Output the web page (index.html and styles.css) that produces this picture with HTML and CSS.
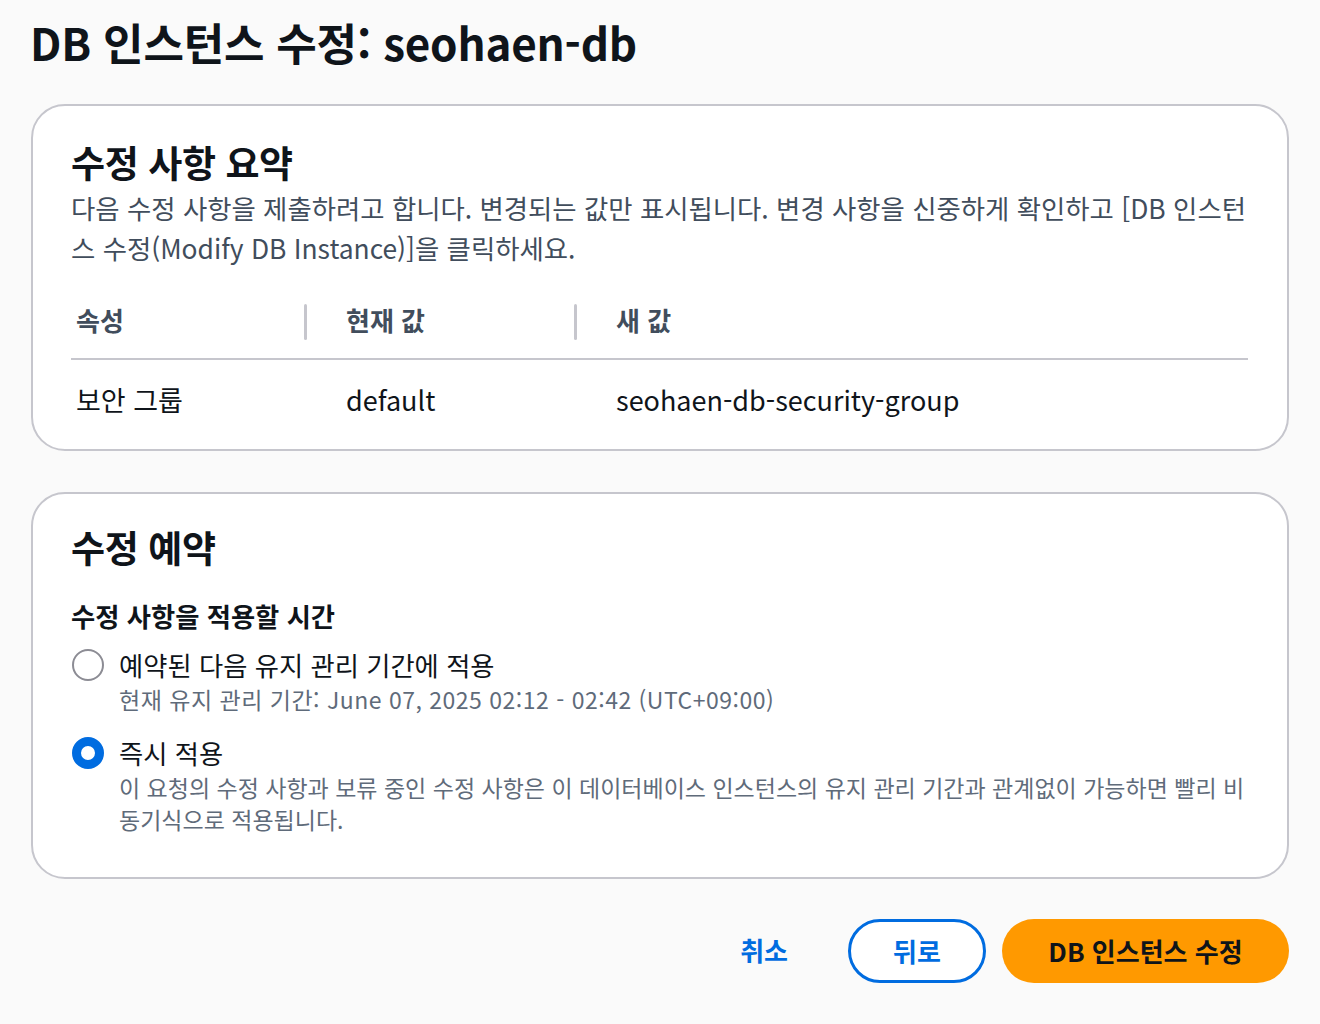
FILE: index.html
```html
<!DOCTYPE html>
<html lang="ko">
<head>
<meta charset="utf-8">
<link rel="stylesheet" href="styles.css">
</head>
<body>
<main class="page">
  <h1 class="title">DB 인스턴스 수정: seohaen-db</h1>

  <section class="card summary">
    <h2 class="card-title">수정 사항 요약</h2>
    <p class="desc">다음 수정 사항을 제출하려고 합니다. 변경되는 값만 표시됩니다. 변경 사항을 신중하게 확인하고 [DB 인스턴스 수정(Modify DB Instance)]을 클릭하세요.</p>
    <div class="table">
      <div class="th first"><span>속성</span></div>
      <div class="th"><span class="divider"></span><span>현재 값</span></div>
      <div class="th"><span class="divider"></span><span>새 값</span></div>
      <div class="td first">보안 그룹</div>
      <div class="td">default</div>
      <div class="td">seohaen-db-security-group</div>
    </div>
  </section>

  <section class="card schedule">
    <h2 class="card-title">수정 예약</h2>
    <div class="field-label">수정 사항을 적용할 시간</div>
    <div class="radio-group">
      <div class="radio">
        <span class="circle"></span>
        <div class="radio-text">
          <div class="radio-label">예약된 다음 유지 관리 기간에 적용</div>
          <div class="radio-desc wide">현재 유지 관리 기간: June 07, 2025 02:12 - 02:42 (UTC+09:00)</div>
        </div>
      </div>
      <div class="radio">
        <span class="circle checked"></span>
        <div class="radio-text">
          <div class="radio-label">즉시 적용</div>
          <div class="radio-desc">이 요청의 수정 사항과 보류 중인 수정 사항은 이 데이터베이스 인스턴스의 유지 관리 기간과 관계없이 가능하면 빨리 비동기식으로 적용됩니다.</div>
        </div>
      </div>
    </div>
  </section>

  <div class="actions">
    <button class="btn link">취소</button>
    <button class="btn normal">뒤로</button>
    <button class="btn primary">DB 인스턴스 수정</button>
  </div>
</main>
</body>
</html>
```

FILE: styles.css
```css
* { box-sizing: border-box; }
html, body {
  margin: 0;
  padding: 0;
  background: #fafafa;
}
body {
  font-family: "Noto Sans CJK KR", "Noto Sans", sans-serif;
  color: #000716;
}
.page {
  width: 1320px;
  padding: 12px 31px 0 31px;
}
.title {
  margin: 0 0 0 -1px;
  font-size: 44px;
  line-height: 60px;
  font-weight: 700;
  letter-spacing: -0.2px;
  color: #0f141a;
}
.card {
  background: #ffffff;
  border: 2px solid #c6c6cd;
  border-radius: 34px;
  padding: 0 39px 0 38px;
}
.summary {
  margin-top: 32px;
  height: 347px;
  padding-top: 30px;
}
.schedule {
  margin-top: 41px;
  height: 387px;
  padding-top: 27px;
}
.card-title {
  margin: 0;
  font-size: 37px;
  line-height: 52px;
  font-weight: 700;
  color: #0f141a;
  letter-spacing: -0.4px;
}
.desc {
  margin: 0;
  font-size: 26.4px;
  line-height: 40px;
  color: #414d5c;
}
.table {
  margin-top: 38px;
  display: grid;
  grid-template-columns: 233px 270px 1fr;
}
.th {
  position: relative;
  height: 54px;
  border-bottom: 2px solid #c6c6cd;
  font-size: 26px;
  font-weight: 700;
  color: #414d5c;
  line-height: 26px;
  padding: 0 0 0 42px;
  display: flex;
  align-items: flex-start;
}
.th span:last-child { margin-top: 1px; }
.th.first { padding-left: 5px; }
.divider {
  position: absolute;
  left: 0;
  top: -2px;
  width: 3px;
  height: 36px;
  background: #c6c6cd;
  border-radius: 2px;
}
.td {
  font-size: 27px;
  line-height: 30px;
  padding: 25px 0 0 42px;
  color: #0f141a;
}
.td.first { padding-left: 5px; }
.field-label {
  margin-top: 26px;
  font-size: 26.3px;
  line-height: 34px;
  font-weight: 700;
  color: #0f141a;
}
.radio-group {
  margin-top: 13px;
  display: flex;
  flex-direction: column;
  gap: 19px;
}
.radio {
  display: flex;
  gap: 15px;
  padding-left: 1px;
}
.circle {
  flex: none;
  width: 32px;
  height: 32px;
  margin-top: 3px;
  border: 2px solid #8c8c94;
  border-radius: 50%;
  background: #fff;
}
.circle.checked {
  border: 9px solid #006ce0;
}
.radio-label {
  font-size: 26.3px;
  line-height: 38px;
  color: #0f141a;
}
.radio-desc {
  font-size: 23px;
  line-height: 32px;
  color: #5f6b7a;
  margin-top: -1px;
}
.radio-desc.wide {
  letter-spacing: 0.5px;
}
.actions {
  margin-top: 40px;
  display: flex;
  justify-content: flex-end;
  align-items: center;
  gap: 16px;
}
.btn {
  font-family: "Noto Sans CJK KR", "Noto Sans", sans-serif;
  font-size: 26px;
  font-weight: 700;
  height: 64px;
  border-radius: 32px;
  cursor: pointer;
  padding-bottom: 3px;
}
.btn.link {
  background: none;
  border: none;
  color: #006ce0;
  padding: 0 44px 3px;
}
.btn.normal {
  background: #fff;
  border: 3px solid #006ce0;
  color: #006ce0;
  width: 138px;
}
.btn.primary {
  background: #ff9900;
  border: none;
  color: #0f141a;
  width: 287px;
}
```
